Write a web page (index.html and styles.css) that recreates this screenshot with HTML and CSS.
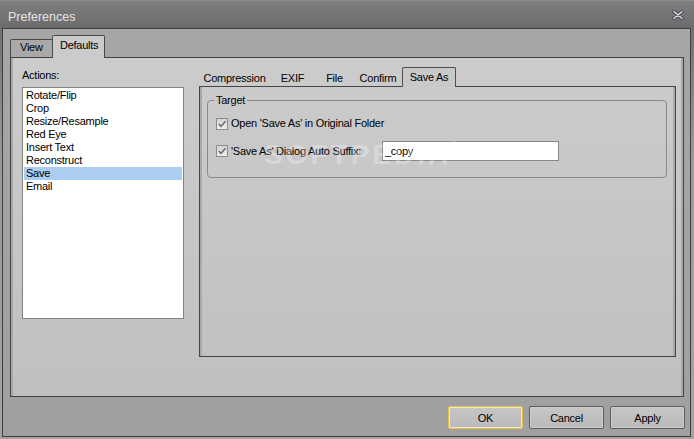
FILE: index.html
```html
<!DOCTYPE html>
<html lang="en">
<head>
    <meta charset="UTF-8">
    <meta name="viewport" content="width=device-width, initial-scale=1.0">
    <title>Preferences</title>
    <link rel="stylesheet" href="styles.css">
</head>
<body>
    <div class="titlebar">
        <span class="title">Preferences</span>
        <svg class="close" width="12" height="10" viewBox="0 0 12 10">
            <path d="M2 1.6 L10 8.4 M10 1.6 L2 8.4" stroke="#4a4a54" stroke-width="3.6" stroke-linecap="round" fill="none"/>
            <path d="M2 1.6 L10 8.4 M10 1.6 L2 8.4" stroke="#d2d2d8" stroke-width="1.5" stroke-linecap="round" fill="none"/>
        </svg>
    </div>

    <div class="frame">
        <div class="tabs">
            <div class="tab">View</div>
            <div class="tab active">Defaults</div>
        </div>

        <div class="panel">
            <div class="actions">
                <div class="actions-label">Actions:</div>
                <ul class="action-list">
                    <li>Rotate/Flip</li>
                    <li>Crop</li>
                    <li>Resize/Resample</li>
                    <li>Red Eye</li>
                    <li>Insert Text</li>
                    <li>Reconstruct</li>
                    <li class="selected">Save</li>
                    <li>Email</li>
                </ul>
            </div>

            <div class="settings">
                <div class="subtabs">
                    <div class="subtab w-compression">Compression</div>
                    <div class="subtab w-exif">EXIF</div>
                    <div class="subtab w-file">File</div>
                    <div class="subtab w-confirm">Confirm</div>
                    <div class="subtab active w-saveas">Save As</div>
                </div>

                <div class="subpanel">
                    <fieldset class="group">
                        <legend>Target</legend>
                        <div class="row">
                            <span class="check">
                                <svg width="10" height="10" viewBox="0 0 10 10"><path d="M1.8 5 L4 7.4 L8.4 2.2" stroke="#6c6c6c" stroke-width="1.6" fill="none"/></svg>
                            </span>
                            <span>Open 'Save As' in Original Folder</span>
                        </div>
                        <div class="row">
                            <span class="check">
                                <svg width="10" height="10" viewBox="0 0 10 10"><path d="M1.8 5 L4 7.4 L8.4 2.2" stroke="#6c6c6c" stroke-width="1.6" fill="none"/></svg>
                            </span>
                            <span class="suffix-label">'Save As' Dialog Auto Suffix:</span>
                            <input class="suffix" type="text" value="_copy">
                        </div>
                    </fieldset>
                    <div class="watermark">SOFTPEDIA<span class="reg">®</span></div>
                </div>
            </div>
        </div>

        <div class="buttons">
            <button class="btn default">OK</button>
            <button class="btn">Cancel</button>
            <button class="btn">Apply</button>
        </div>
    </div>
</body>
</html>
```

FILE: styles.css
```css
* {
    margin: 0;
    padding: 0;
    box-sizing: border-box;
}

body {
    width: 694px;
    height: 439px;
    overflow: hidden;
    background: linear-gradient(#727272 28px, #9a9a9a 160px, #a4a4a4);
    font-family: 'Liberation Sans', Arial, sans-serif;
    font-size: 11px;
    letter-spacing: -0.25px;
    line-height: 13px;
    color: #000;
}

.titlebar {
    height: 28px;
    display: flex;
    justify-content: space-between;
    align-items: flex-start;
    padding: 0 10px 0 8px;
    background: linear-gradient(#7e7e7e, #6c6c6c);
    border-top: 1px solid #8c8c8c;
}

.title {
    color: #e4e4e4;
    font-size: 12.5px;
    letter-spacing: 0;
    line-height: 13px;
    margin-top: 10px;
}

.close {
    margin-top: 9px;
}

.frame {
    margin: 0 3px 2px 2px;
    height: 409px;
    border: 1px solid #3e3e3e;
    background: linear-gradient(#a6a6a6, #a0a0a0);
    padding: 6px 5px 0 7px;
}

/* outer tabs */
.tabs {
    display: flex;
    align-items: flex-end;
    height: 22px;
}

.tab {
    height: 18px;
    width: 43px;
    padding: 1px 0 0 9px;
    background: #a9a9a9;
    border: 1px solid #4a4a4a;
    border-bottom: none;
    border-radius: 2px 2px 0 0;
}

.tab.active {
    position: relative;
    z-index: 1;
    width: 53px;
    height: 23px;
    margin-left: -1px;
    margin-bottom: -1px;
    padding: 3px 0 0 7px;
    background: #cbcbcb;
}

.panel {
    width: 674px;
    height: 340px;
    display: flex;
    padding: 11px 0 0 11px;
    border: 1px solid #424242;
    background: linear-gradient(#cccccc, #c0c0c0);
    box-shadow: inset 2px 0 #a9a9a9, inset -2px 0 #a9a9a9;
}

/* action list */
.actions {
    width: 162px;
}

.actions-label {
    margin-bottom: 5px;
}

.action-list {
    list-style: none;
    height: 232px;
    padding: 1px 1px 0;
    background: white;
    border: 1px solid #828282;
}

.action-list li {
    padding-left: 2px;
    height: 13px;
}

.action-list li.selected {
    background: #aacdf0;
}

/* right side */
.settings {
    width: 477px;
    margin-left: 15px;
    margin-top: -2px;
}

.subtabs {
    display: flex;
    height: 19px;
}

.subtab {
    padding-top: 5px;
    text-align: center;
}

.subtab.active {
    position: relative;
    z-index: 1;
    height: 20px;
    margin-bottom: -1px;
    padding-top: 3px;
    background: #c9c9c9;
    border: 1px solid #4e4e4e;
    border-bottom: none;
    border-radius: 2px 2px 0 0;
}

.w-compression { width: 71px; }
.w-exif { width: 45px; }
.w-file { width: 39px; }
.w-confirm { width: 48px; }
.w-saveas { width: 54px; }

.subpanel {
    position: relative;
    height: 271px;
    padding: 0 0 0 7px;
    border: 1px solid #454545;
    box-shadow: inset 2px 0 #a9a9a9, inset -2px 0 #a9a9a9;
}

.group {
    width: 460px;
    margin-top: 7px;
    padding: 0 0 16px 6px;
    border: 1px solid #8a8a8a;
    border-radius: 4px;
}

.group legend {
    padding: 0 2px;
    line-height: 13px;
}

.row {
    display: flex;
    align-items: center;
    height: 13px;
    margin-top: 10px;
}

.row + .row {
    height: 20px;
    margin-top: 11px;
}

.check {
    width: 12px;
    height: 12px;
    margin: 0 3px 0 2px;
    display: flex;
    align-items: center;
    justify-content: center;
    border: 1px solid #8c8c8c;
    background: linear-gradient(#d4d4d4, #eeeeee);
    flex-shrink: 0;
}

.suffix-label {
    width: 151px;
    flex-shrink: 0;
}

.suffix {
    width: 177px;
    height: 20px;
    padding-left: 2px;
    border: 1px solid #878787;
    background: white;
    font-family: inherit;
    font-size: 11px;
    letter-spacing: -0.25px;
    color: #000;
    outline: none;
}

.watermark {
    position: absolute;
    left: 64px;
    top: 54px;
    font-size: 28px;
    font-weight: bold;
    letter-spacing: 3px;
    line-height: 28px;
    color: rgba(255, 255, 255, 0.3);
    pointer-events: none;
}

.watermark .reg {
    font-size: 10px;
    vertical-align: top;
    letter-spacing: 0;
    line-height: 10px;
}

/* dialog buttons */
.buttons {
    display: flex;
    justify-content: flex-end;
    gap: 6px;
    margin-top: 9px;
}

.btn {
    width: 75px;
    height: 23px;
    border: 1px solid #5c5c5c;
    border-radius: 2px;
    background: linear-gradient(#c6c6c6, #bababa);
    box-shadow: inset 0 0 0 1px #cdcdcd;
    font-family: inherit;
    font-size: 11px;
    letter-spacing: -0.25px;
    color: #000;
}

.btn.default {
    border-color: #e2bf45;
    box-shadow: inset 0 0 0 1px #f2e8c4;
}
```
